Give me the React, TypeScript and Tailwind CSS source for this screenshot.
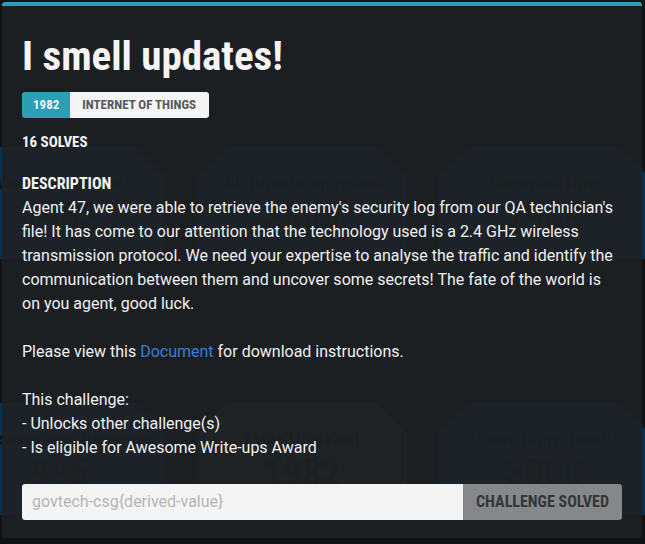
import type { FC } from 'react';

interface CardI {
  title: string;
  points: string;
  solved?: boolean;
}

const rows: CardI[][] = [
  [
    { title: 'Voice of the Dead', points: '1952' },
    { title: 'Our Drive is encrypted!', points: '2000' },
    { title: 'Corrupted Hive', points: '2988' },
  ],
  [
    { title: 'The suspicious frequency', points: '995' },
    { title: 'I smell updates!', points: '1982', solved: true },
    { title: 'Laura is my friend!', points: '3000' },
  ],
];

const condensed = "font-['Roboto_Condensed','Liberation_Sans_Narrow','DejaVu_Sans_Condensed',sans-serif]";

const Card: FC<{ card: CardI }> = ({ card }) => (
  <div
    className={`flex h-[112px] w-[210px] shrink-0 flex-col items-center pt-[22px] [clip-path:polygon(30px_0,180px_0,210px_30px,210px_100%,0_100%,0_30px)] ${
      card.solved ? 'bg-[#2e363a]' : 'bg-[#0a3050]'
    }`}
  >
    <div className={`${condensed} whitespace-nowrap text-[18px] font-bold text-[#10161c]`}>{card.title}</div>
    <div className={`${condensed} text-[38px] leading-[42px] font-bold text-[#10161c]`}>{card.points}</div>
  </div>
);

export default function App() {
  return (
    <div className="relative h-[544px] w-[645px] overflow-hidden bg-[#101316] font-['Roboto',sans-serif]">
      {/* page behind the modal */}
      <div className="ml-[-45px] flex flex-col gap-[144px] pt-[147px]">
        {rows.map((row, i) => (
          <div key={i} className="flex gap-[32px]">
            {row.map((card) => (
              <Card key={card.title} card={card} />
            ))}
          </div>
        ))}
      </div>

      {/* modal */}
      <div className="absolute top-[2px] left-[2px] h-[536px] w-[640px] rounded-[3px] border-t-[4px] border-[#2a9fb6] bg-[#1e2124]/90 px-[20px]">
        <h1 className={`${condensed} mt-[28px] text-[41px] leading-[44px] font-bold text-[#f4f4f4]`}>
          I smell updates!
        </h1>
        <div className={`${condensed} mt-[14px] inline-flex h-[26px] overflow-hidden rounded-[3px] text-[13px] font-bold`}>
          <span className="flex items-center bg-[#2a9fb6] px-[11px] text-[#f4f4f4]">1982</span>
          <span className="flex items-center bg-[#f4f4f4] px-[12px] pr-[13px] text-[#555a5f]">INTERNET OF THINGS</span>
        </div>
        <div className={`${condensed} mt-[14px] text-[15px] leading-[20px] font-bold text-[#f4f4f4]`}>16 SOLVES</div>

        <div className={`${condensed} mt-[20px] text-[16px] leading-[24px] font-bold text-[#f4f4f4]`}>DESCRIPTION</div>
        <div className="text-[16px] leading-[24px] text-[#f0f0f0]">
          <p>
            Agent 47, we were able to retrieve the enemy's security log from our QA technician's file! It has come to
            our attention that the technology used is a 2.4 GHz wireless transmission protocol. We need your expertise
            to analyse the traffic and identify the communication between them and uncover some secrets! The fate of the
            world is on you agent, good luck.
          </p>
          <p className="mt-[24px]">
            Please view this <span className="text-[#3a7bd5]">Document</span> for download instructions.
          </p>
          <p className="mt-[24px]">This challenge:</p>
          <p>- Unlocks other challenge(s)</p>
          <p>- Is eligible for Awesome Write-ups Award</p>
        </div>

        <div className="mt-[24px] flex h-[36px] overflow-hidden rounded-[3px]">
          <div className="flex flex-1 items-center bg-[#f4f4f4] px-[10px] text-[16px] text-[#b4b4b4]">
            govtech-csg{'{'}derived-value{'}'}
          </div>
          <div
            className={`${condensed} flex w-[159px] items-center justify-center whitespace-nowrap bg-[#86878a] text-[16px] font-bold text-[#33373b]`}
          >
            CHALLENGE SOLVED
          </div>
        </div>
      </div>
    </div>
  );
}
